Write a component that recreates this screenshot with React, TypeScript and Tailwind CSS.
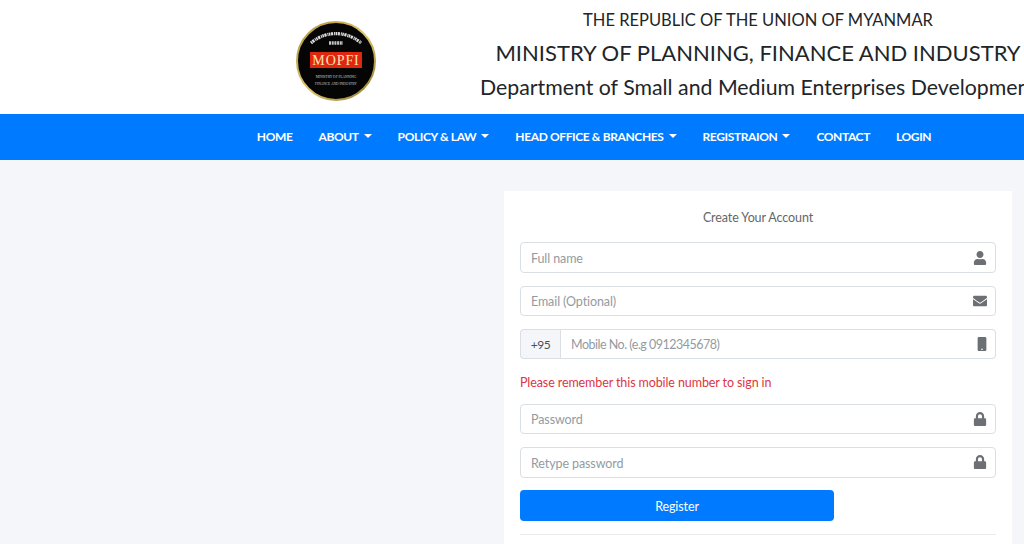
import { FaEnvelope, FaLock, FaMobile, FaUser } from "react-icons/fa";
import type { ReactNode } from "react";

function Logo() {
  return (
    <svg width="80" height="80" viewBox="0 0 80 80" className="mt-[21px] shrink-0">
      <defs>
        <linearGradient id="ring" x1="0" y1="0" x2="1" y2="1">
          <stop offset="0" stopColor="#a8923f" />
          <stop offset="0.5" stopColor="#e0c56a" />
          <stop offset="1" stopColor="#8f7a2f" />
        </linearGradient>
      </defs>
      <circle cx="40" cy="40" r="39" fill="#050505" stroke="url(#ring)" strokeWidth="2" />
      <path d="M15 22 A38 38 0 0 1 65 22" fill="none" stroke="#dcdcdc" strokeWidth="3.2" strokeDasharray="1.5 0.6 2.2 0.9 1 0.5" />
      <path d="M33 22 h14" stroke="#c4c4c4" strokeWidth="3.4" strokeDasharray="2 0.7" />
      <rect x="14" y="31" width="52" height="16" rx="0.5" fill="#e0260f" />
      <text x="40" y="44" textAnchor="middle" fontFamily="Liberation Serif, serif" fontSize="14" fill="#fbe3b0" letterSpacing="0.9">
        MOPFI
      </text>
      <text x="40" y="57" textAnchor="middle" fontFamily="Liberation Serif, serif" fontSize="3.5" fill="#ccc">
        MINISTRY OF PLANNING
      </text>
      <text x="40" y="64" textAnchor="middle" fontFamily="Liberation Serif, serif" fontSize="3.5" fill="#ccc">
        FINANCE AND INDUSTRY
      </text>
    </svg>
  );
}

function NavItem({ label, caret }: { label: string; caret?: boolean }) {
  return (
    <a className="flex items-center gap-[5px] px-[13px] text-[12px] font-bold tracking-[-0.38px] whitespace-nowrap text-white uppercase">
      {label}
      {caret && <span className="mt-[-2px] border-x-[4px] border-t-[4px] border-x-transparent border-t-white" />}
    </a>
  );
}

function Field({ placeholder, icon, tight }: { placeholder: string; icon: ReactNode; tight?: boolean }) {
  return (
    <div className="flex h-[30.3px] items-center rounded border border-[#dadfe3] bg-white pr-[8px]">
      <input
        placeholder={placeholder}
        className={`min-w-0 flex-1 bg-transparent pt-[3px] pl-[10px] text-[12.5px] outline-none placeholder:text-[#939ba2] ${tight ? "tracking-[-0.5px]" : "tracking-[-0.1px]"}`}
      />
      <span className="text-[14px] text-[#6c6f73]">{icon}</span>
    </div>
  );
}

export default function App() {
  return (
    <div className="flex h-[544px] w-[1024px] flex-col overflow-hidden bg-[#f4f6f9] font-['Lato',sans-serif]">
      <header className="flex h-[114px] shrink-0 bg-white pl-[296px]">
        <Logo />
        <div className="ml-[104px] w-[556px] shrink-0 pt-[8px] text-center whitespace-nowrap text-[#212529]">
          <p className="text-[16.5px] leading-[24px]">THE REPUBLIC OF THE UNION OF MYANMAR</p>
          <p className="mt-[5px] text-[22px] leading-[32px]">MINISTRY OF PLANNING, FINANCE AND INDUSTRY</p>
          <p className="mt-[3px] text-[21.3px] leading-[30px]">Department of Small and Medium Enterprises Development</p>
        </div>
      </header>
      <nav className="flex h-[46px] shrink-0 items-center justify-center bg-[#007bff] pl-[164px]">
        <NavItem label="Home" />
        <NavItem label="About" caret />
        <NavItem label="Policy & Law" caret />
        <NavItem label="Head Office & Branches" caret />
        <NavItem label="Registraion" caret />
        <NavItem label="Contact" />
        <NavItem label="Login" />
      </nav>
      <main className="flex flex-1 justify-end pt-[31px] pr-[12px]">
        <section className="h-[400px] w-[508px] bg-white px-4 pt-[17px]">
          <p className="text-center text-[12.5px] leading-[20px] tracking-[-0.1px] text-[#666]">Create Your Account</p>
          <div className="mt-[14.4px] flex flex-col gap-[13px]">
            <Field placeholder="Full name" icon={<FaUser />} />
            <Field placeholder="Email (Optional)" icon={<FaEnvelope />} />
            <div className="flex h-[30.3px]">
              <span className="flex w-[40px] items-center justify-center rounded-l border border-r-0 border-[#dadfe3] bg-[#f4f6f9] pt-[2px] text-[12px] tracking-[-0.4px] text-[#495057]">+95</span>
              <div className="flex-1 [&>div]:rounded-l-none">
                <Field placeholder="Mobile No. (e.g 0912345678)" tight icon={<FaMobile className="translate-x-[2px]" />} />
              </div>
            </div>
          </div>
          <p className="mt-[13.7px] text-[12.5px] leading-[20px] tracking-[-0.1px] text-[#dc3545]">Please remember this mobile number to sign in</p>
          <div className="mt-[11px] flex flex-col gap-[13px]">
            <Field placeholder="Password" icon={<FaLock />} />
            <Field placeholder="Retype password" icon={<FaLock />} />
          </div>
          <button className="mt-[12.7px] h-[30.4px] w-[314px] rounded bg-[#007bff] pt-[3px] text-[12.5px] tracking-[-0.1px] text-white">Register</button>
          <hr className="mt-[13px] border-t border-[#e9ecef]" />
        </section>
      </main>
    </div>
  );
}
